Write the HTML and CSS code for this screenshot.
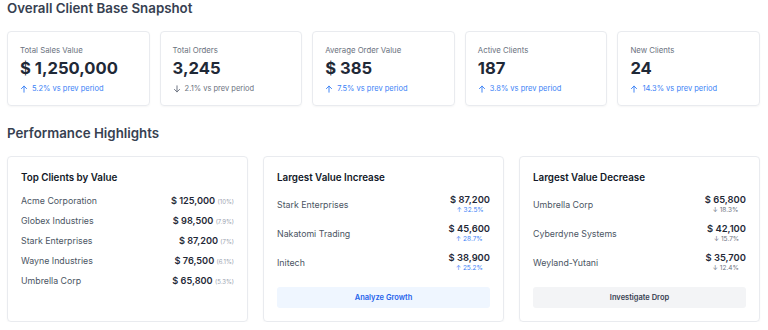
FILE: index.html
```html
<!DOCTYPE html>
<html lang="en">
<head>
  <meta charset="UTF-8" />
  <title>Client Base Snapshot</title>
  <link rel="stylesheet" href="styles.css">
</head>
<body>
  <h2 class="section-title">Overall Client Base Snapshot</h2>

  <div class="stats">
    <div class="stat-card">
      <div class="stat-label">Total Sales Value</div>
      <div class="stat-value">$ 1,250,000</div>
      <div class="stat-change up">
        <svg viewBox="0 0 10 10"><path d="M5 9V1.5M1.8 4.5L5 1.3l3.2 3.2"/></svg>
        5.2% vs prev period
      </div>
    </div>
    <div class="stat-card">
      <div class="stat-label">Total Orders</div>
      <div class="stat-value">3,245</div>
      <div class="stat-change down">
        <svg viewBox="0 0 10 10"><path d="M5 1v7.5M1.8 5.5L5 8.7l3.2-3.2"/></svg>
        2.1% vs prev period
      </div>
    </div>
    <div class="stat-card">
      <div class="stat-label">Average Order Value</div>
      <div class="stat-value">$ 385</div>
      <div class="stat-change up">
        <svg viewBox="0 0 10 10"><path d="M5 9V1.5M1.8 4.5L5 1.3l3.2 3.2"/></svg>
        7.5% vs prev period
      </div>
    </div>
    <div class="stat-card">
      <div class="stat-label">Active Clients</div>
      <div class="stat-value">187</div>
      <div class="stat-change up">
        <svg viewBox="0 0 10 10"><path d="M5 9V1.5M1.8 4.5L5 1.3l3.2 3.2"/></svg>
        3.8% vs prev period
      </div>
    </div>
    <div class="stat-card">
      <div class="stat-label">New Clients</div>
      <div class="stat-value">24</div>
      <div class="stat-change up">
        <svg viewBox="0 0 10 10"><path d="M5 9V1.5M1.8 4.5L5 1.3l3.2 3.2"/></svg>
        14.3% vs prev period
      </div>
    </div>
  </div>

  <h2 class="section-title second">Performance Highlights</h2>

  <div class="panels">
    <div class="panel">
      <h3>Top Clients by Value</h3>
      <ul class="top-list">
        <li><span>Acme Corporation</span><span class="amount">$ 125,000 <small>(10%)</small></span></li>
        <li><span>Globex Industries</span><span class="amount">$ 98,500 <small>(7.9%)</small></span></li>
        <li><span>Stark Enterprises</span><span class="amount">$ 87,200 <small>(7%)</small></span></li>
        <li><span>Wayne Industries</span><span class="amount">$ 76,500 <small>(6.1%)</small></span></li>
        <li><span>Umbrella Corp</span><span class="amount">$ 65,800 <small>(5.3%)</small></span></li>
      </ul>
    </div>

    <div class="panel">
      <h3>Largest Value Increase</h3>
      <ul class="move-list">
        <li><span>Stark Enterprises</span><div class="move"><b>$ 87,200</b><small class="up">↑ 32.5%</small></div></li>
        <li><span>Nakatomi Trading</span><div class="move"><b>$ 45,600</b><small class="up">↑ 28.7%</small></div></li>
        <li><span>Initech</span><div class="move"><b>$ 38,900</b><small class="up">↑ 25.2%</small></div></li>
      </ul>
      <button class="action blue">Analyze Growth</button>
    </div>

    <div class="panel">
      <h3>Largest Value Decrease</h3>
      <ul class="move-list">
        <li><span>Umbrella Corp</span><div class="move"><b>$ 65,800</b><small class="down">↓ 18.3%</small></div></li>
        <li><span>Cyberdyne Systems</span><div class="move"><b>$ 42,100</b><small class="down">↓ 15.7%</small></div></li>
        <li><span>Weyland-Yutani</span><div class="move"><b>$ 35,700</b><small class="down">↓ 12.4%</small></div></li>
      </ul>
      <button class="action gray">Investigate Drop</button>
    </div>
  </div>
</body>
</html>
```

FILE: styles.css
```css
* {
  box-sizing: border-box;
}

body {
  margin: 0;
  padding: 0 8px 0 7px;
  font-family: Inter, "Noto Sans", sans-serif;
  background: #fff;
  color: #1f2937;
}

.section-title {
  margin: 0;
  font-size: 13.3px;
  line-height: 17px;
  font-weight: 600;
  color: #374151;
}

.section-title.second {
  margin-top: 19px;
}

.stats {
  display: grid;
  grid-template-columns: repeat(5, 1fr);
  gap: 10px;
  margin-top: 14px;
}

.stat-card {
  height: 75px;
  border: 1px solid #e9ebef;
  border-radius: 4px;
  box-shadow: 0 1px 2px rgba(0, 0, 0, 0.04);
  padding: 13px 12px;
}

.stat-label {
  font-size: 7.8px;
  line-height: 10px;
  color: #6b7280;
}

.stat-value {
  margin-top: 3px;
  font-size: 16.6px;
  line-height: 20px;
  font-weight: 700;
  color: #1f2937;
}

.stat-change {
  margin-top: 6px;
  display: flex;
  align-items: center;
  gap: 4px;
  font-size: 7.5px;
  line-height: 10px;
}

.stat-change svg {
  width: 8px;
  height: 8px;
  fill: none;
  stroke: currentColor;
  stroke-width: 1.2;
  stroke-linecap: round;
  stroke-linejoin: round;
}

.up {
  color: #3b82f6;
}

.down {
  color: #6b7280;
}

.panels {
  display: grid;
  grid-template-columns: repeat(3, 1fr);
  gap: 15px;
  margin-top: 14px;
}

.panel {
  height: 166px;
  border: 1px solid #e9ebef;
  border-radius: 4px;
  box-shadow: 0 1px 2px rgba(0, 0, 0, 0.04);
  padding: 14px 13px 13px;
  display: flex;
  flex-direction: column;
}

.panel h3 {
  margin: 0;
  font-size: 9.8px;
  line-height: 13px;
  font-weight: 600;
  color: #111827;
}

.top-list,
.move-list {
  list-style: none;
  margin: 0;
  padding: 0;
}

.top-list {
  margin-top: 6px;
}

.top-list li {
  display: flex;
  justify-content: space-between;
  align-items: center;
  height: 20px;
  font-size: 8.8px;
  color: #4b5563;
}

.amount {
  font-size: 9.2px;
  font-weight: 600;
  color: #1f2937;
}

.amount small {
  font-size: 6px;
  font-weight: 400;
  color: #9ca3af;
}

.move-list {
  margin-top: 6px;
}

.move-list li {
  display: flex;
  justify-content: space-between;
  align-items: center;
  height: 29px;
  font-size: 8.8px;
  color: #4b5563;
}

.move {
  display: flex;
  flex-direction: column;
  align-items: center;
}

.move b {
  font-size: 9.4px;
  line-height: 12px;
  font-weight: 600;
  color: #1f2937;
}

.move small {
  font-size: 6.5px;
  line-height: 9px;
}

.action {
  margin-top: auto;
  height: 21px;
  border: none;
  border-radius: 3px;
  font-family: inherit;
  font-size: 7.5px;
  font-weight: 600;
}

.action.blue {
  background: #eff6ff;
  color: #2563eb;
}

.action.gray {
  background: #f3f4f6;
  color: #374151;
}
```
